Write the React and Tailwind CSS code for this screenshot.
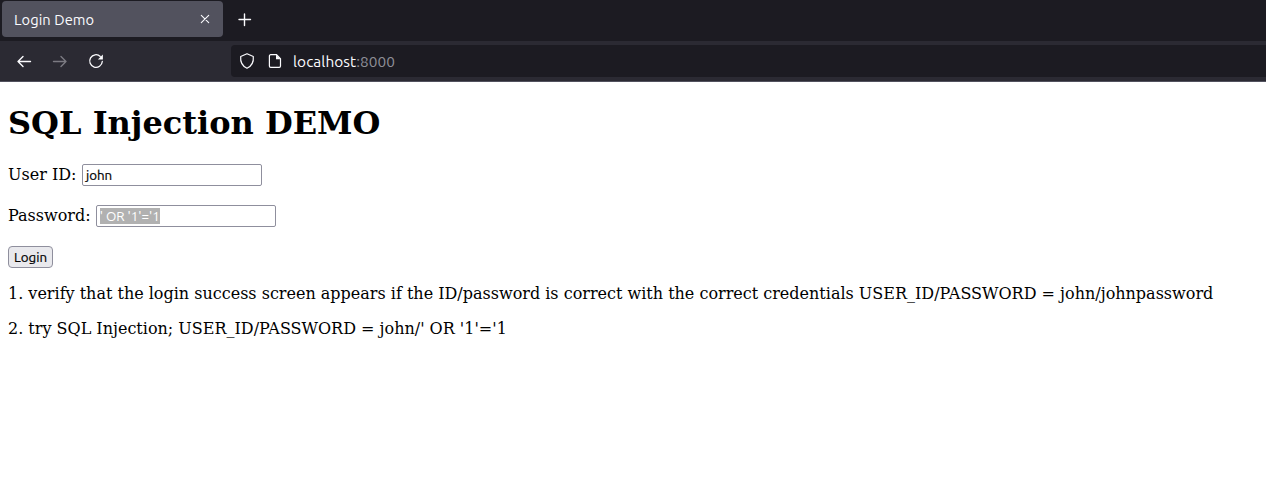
const icon = "fill-none stroke-[#fbfbfe]";

function BrowserChrome() {
  return (
    <header className="font-['Ubuntu','Noto_Sans',sans-serif] text-[#fbfbfe]">
      <div className="flex h-[41px] items-start bg-[#1c1b22]">
        <div className="ml-[2px] mt-px flex h-9 w-[221px] items-center justify-between rounded-[4px] bg-[#52525e] pl-3 pr-3">
          <span className="pt-0.5 text-[14.67px] leading-5 tracking-[0.08px]">Login Demo</span>
          <svg className={`${icon} size-3`} viewBox="0 0 12 12">
            <path d="M2.3 2.3l7.4 7.4M9.7 2.3l-7.4 7.4" strokeWidth="1.1" strokeLinecap="round" />
          </svg>
        </div>
        <svg className={`${icon} ml-[14px] mt-[12px] size-4`} viewBox="0 0 16 16">
          <path d="M7.5 2v11.5M2 7.5h11.5" strokeWidth="1.4" strokeLinecap="round" />
        </svg>
      </div>
      <nav className="flex h-[41px] items-center border-b border-[#52525e] bg-[#2b2a33] pl-4">
        <svg className={`${icon} size-4`} viewBox="0 0 16 16">
          <path d="M14.5 8.5H2M7 3.5l-5 5 5 5" strokeWidth="1.4" strokeLinecap="round" strokeLinejoin="round" />
        </svg>
        <svg className="ml-5 size-4 fill-none stroke-[#7b7a82]" viewBox="0 0 16 16">
          <path d="M1.5 8.5H14M9 3.5l5 5-5 5" strokeWidth="1.4" strokeLinecap="round" strokeLinejoin="round" />
        </svg>
        <svg className={`${icon} ml-5 size-4`} viewBox="0 0 16 16">
          <path d="M12.3 3.4A6.3 6.3 0 1 0 14.3 8.5" strokeWidth="1.3" strokeLinecap="round" />
          <path d="M14.9 1.4v5H9.9z" className="fill-[#fbfbfe] stroke-none" />
        </svg>
        <div className="ml-[127px] flex h-8 flex-1 items-center rounded-l-[4px] bg-[#1c1b22] pl-2">
          <svg className={`${icon} size-4`} viewBox="0 0 16 16">
            <path d="M8 .8L14.3 3.5C14.8 8.5 12.8 13 8 15.3 3.2 13 1.2 8.5 1.7 3.5z" strokeWidth="1.2" strokeLinejoin="round" />
          </svg>
          <svg className={`${icon} ml-3 size-4`} viewBox="0 0 16 16">
            <path d="M3.7 1.7h5.8l4 4v7.3a1.3 1.3 0 0 1-1.3 1.3H3.7A1.3 1.3 0 0 1 2.4 13V3a1.3 1.3 0 0 1 1.3-1.3z" strokeWidth="1.2" />
            <path d="M9 1.5v4.8h4.8z" className="fill-[#fbfbfe] stroke-none" />
          </svg>
          <span className="ml-[10px] pt-0.5 text-[15.4px] leading-5 tracking-[0.07px]">
            localhost<span className="text-[#8f8f98]">:8000</span>
          </span>
        </div>
      </nav>
    </header>
  );
}

const field =
  "h-[22px] w-[180px] rounded-[2px] border border-[#8f8f9d] bg-white pl-[3px] font-['Ubuntu','Noto_Sans',sans-serif] text-[13.33px] flex items-center";

export default function App() {
  return (
    <div className="h-[477px] overflow-hidden bg-white">
      <BrowserChrome />
      <main className="px-2 pt-[23px] font-['DejaVu_Serif',serif] text-base leading-[19px] text-black">
        <h1 className="h-[59px] text-[32px] font-bold leading-[37px]">SQL Injection DEMO</h1>
        <div className="flex h-[22px] items-center gap-[5.5px] whitespace-nowrap">
          <span className="pb-0.5">User ID:</span>
          <div className={field}>
            <span className="pt-0.5 leading-4 [-webkit-text-stroke:0.2px_black]">john</span>
          </div>
        </div>
        <div className="mt-[19px] flex h-[22px] items-center gap-[5px] whitespace-nowrap">
          <span className="pb-0.5">Password:</span>
          <div className={field}>
            <span className="h-4 w-[60px] bg-[#b1b1b1] leading-[18px] text-white">' OR '1'='1</span>
          </div>
        </div>
        <button className="mt-[19px] flex h-[22px] w-[45px] items-center justify-center rounded-[4px] border border-[#8f8f9d] bg-[#e9e9ed] pt-0.5 font-['Ubuntu','Noto_Sans',sans-serif] text-[13.33px] leading-4 [-webkit-text-stroke:0.2px_black]">
          Login
        </button>
        <p className="mt-4 whitespace-nowrap">
          1. verify that the login success screen appears if the ID/password is correct with the correct credentials USER_ID/PASSWORD = john/johnpassword
        </p>
        <p className="mt-4 whitespace-nowrap">2. try SQL Injection; USER_ID/PASSWORD = john/' OR '1'='1</p>
      </main>
    </div>
  );
}
